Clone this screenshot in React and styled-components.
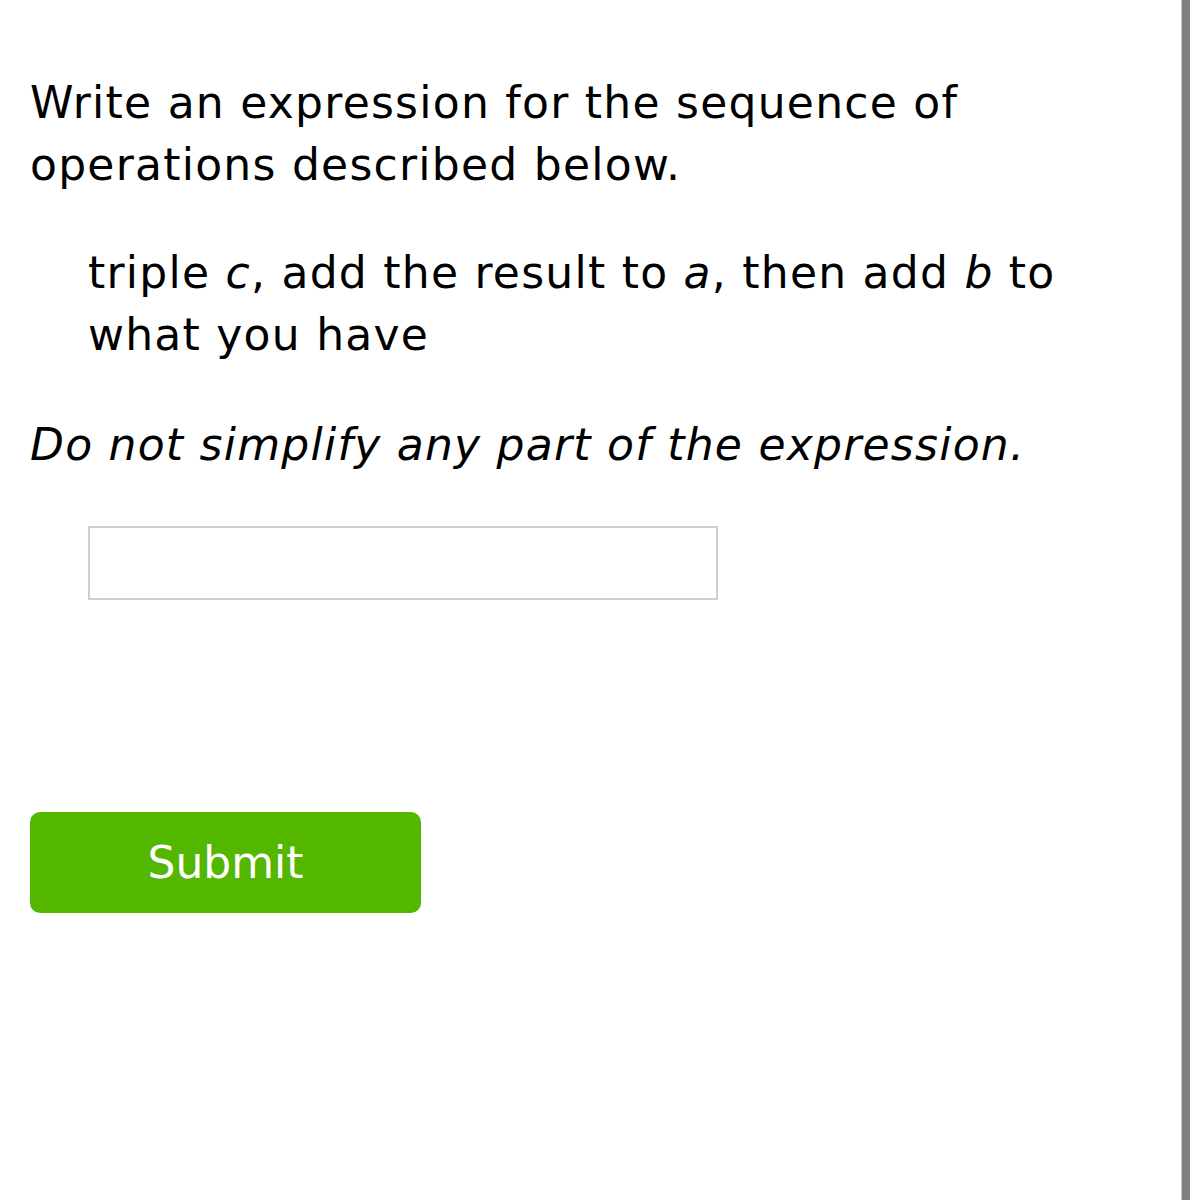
import React from "react";
import styled, { createGlobalStyle } from "styled-components";

const Global = createGlobalStyle`
  html, body { margin: 0; padding: 0; background: #fff; }
  body { font-family: "DejaVu Sans", Verdana, sans-serif; color: #000; }
`;

const Page = styled.div`
  display: flex;
  width: 1200px;
  height: 1200px;
  box-sizing: border-box;
`;

const Content = styled.main`
  flex: 1;
  padding: 72px 0 0 30px;
  display: flex;
  flex-direction: column;
  align-items: flex-start;
`;

const Column = styled.div`
  width: 1045px;
  display: flex;
  flex-direction: column;
  align-items: flex-start;
`;

const ScrollBar = styled.div`
  width: 8px;
  margin-right: 10px;
  background: #808080;
  border-left: 1px solid #c8c8c8;
`;

const Para = styled.p`
  margin: 0;
  font-size: 44px;
  line-height: 62px;
  letter-spacing: 1.25px;
  font-style: ${(p) => (p.$italic ? "italic" : "normal")};
`;

const Indented = styled(Para)`
  margin: 46px 0 0 58px;
`;

const Var = styled.i``;

const Note = styled(Para)`
  margin-top: 48px;
`;

const AnswerBox = styled.input`
  margin: 50px 0 0 58px;
  width: 630px;
  height: 74px;
  box-sizing: border-box;
  border: 2px solid #cfcfcf;
  background: #fff;
  font-size: 40px;
  font-family: inherit;
  outline: none;
`;

const SubmitButton = styled.button`
  margin-top: 212px;
  width: 391px;
  height: 101px;
  border: none;
  border-radius: 10px;
  background: #53b700;
  color: #fff;
  font-family: "DejaVu Sans", Verdana, sans-serif;
  font-size: 44px;
  cursor: pointer;
`;

export default function App() {
  return (
    <>
      <Global />
      <Page>
        <Content>
          <Column>
            <Para>Write an expression for the sequence of operations described below.</Para>
            <Indented>
              triple <Var>c</Var>, add the result to <Var>a</Var>, then add <Var>b</Var> to what you have
            </Indented>
            <Note $italic>Do not simplify any part of the expression.</Note>
            <AnswerBox type="text" aria-label="answer" />
            <SubmitButton>Submit</SubmitButton>
          </Column>
        </Content>
        <ScrollBar />
      </Page>
    </>
  );
}
